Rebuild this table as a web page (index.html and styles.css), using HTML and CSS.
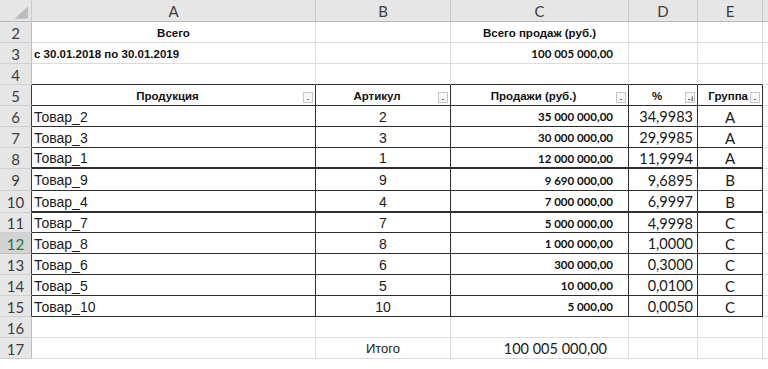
FILE: index.html
```html
<!DOCTYPE html>
<html lang="ru">
<head>
<meta charset="utf-8">
<link rel="stylesheet" href="styles.css">
</head>
<body>
<div class="sheet">
  <!-- header row -->
  <div class="c hd corner"><svg width="32" height="22" viewBox="0 0 32 22"><polygon points="15,19 29,19 29,6" fill="#bdbdbd"/></svg></div>
  <div class="c hd col">A</div>
  <div class="c hd col">B</div>
  <div class="c hd col">C</div>
  <div class="c hd col">D</div>
  <div class="c hd col">E</div>
  <div class="c hd fill"></div>

  <!-- row 2 -->
  <div class="c rh">2</div>
  <div class="c b ctr">Всего</div>
  <div class="c"></div>
  <div class="c b ctr">Всего продаж (руб.)</div>
  <div class="c"></div>
  <div class="c"></div>
  <div class="c fill"></div>

  <!-- row 3 -->
  <div class="c rh">3</div>
  <div class="c b left">с 30.01.2018 по 30.01.2019</div>
  <div class="c"></div>
  <div class="c cnum total3">100 005 000,00</div>
  <div class="c"></div>
  <div class="c"></div>
  <div class="c fill"></div>

  <!-- row 4 -->
  <div class="c rh">4</div>
  <div class="c topb"></div>
  <div class="c topb"></div>
  <div class="c topb"></div>
  <div class="c topb"></div>
  <div class="c topb"></div>
  <div class="c fill"></div>

  <!-- row 5 -->
  <div class="c rh tl">5</div>
  <div class="c t th"><span class="thl">Продукция</span><span class="fb"><svg width="9" height="10" viewBox="0 0 9 10"><polygon points="3,6 6,6 4.5,7.5" fill="#444"/></svg></span></div>
  <div class="c t th"><span class="thl">Артикул</span><span class="fb"><svg width="9" height="10" viewBox="0 0 9 10"><polygon points="3,6 6,6 4.5,7.5" fill="#444"/></svg></span></div>
  <div class="c t th"><span class="thl">Продажи (руб.)</span><span class="fb"><svg width="9" height="10" viewBox="0 0 9 10"><polygon points="3,6 6,6 4.5,7.5" fill="#444"/></svg></span></div>
  <div class="c t th"><span class="thl">%</span><span class="fb"><svg width="9" height="10" viewBox="0 0 9 10"><polygon points="2,6 5,6 3.5,7.5" fill="#444"/><line x1="7" y1="3" x2="7" y2="8" stroke="#444" stroke-width="0.9"/><polyline points="5.8,6.8 7,8 8.2,6.8" fill="none" stroke="#444" stroke-width="0.8"/></svg></span></div>
  <div class="c t th thE"><span class="thl">Группа</span><span class="fb"><svg width="9" height="10" viewBox="0 0 9 10"><polygon points="3,6 6,6 4.5,7.5" fill="#444"/></svg></span></div>
  <div class="c fill"></div>

  <!-- row 6 -->
  <div class="c rh tl">6</div>
  <div class="c t name">Товар_2</div>
  <div class="c t art">2</div>
  <div class="c t cnum">35 000 000,00</div>
  <div class="c t pct">34,9983</div>
  <div class="c t grp">A</div>
  <div class="c fill"></div>

  <!-- row 7 -->
  <div class="c rh tl">7</div>
  <div class="c t name">Товар_3</div>
  <div class="c t art">3</div>
  <div class="c t cnum">30 000 000,00</div>
  <div class="c t pct">29,9985</div>
  <div class="c t grp">A</div>
  <div class="c fill"></div>

  <!-- row 8 -->
  <div class="c rh tl">8</div>
  <div class="c t name thick">Товар_1</div>
  <div class="c t art thick">1</div>
  <div class="c t cnum thick">12 000 000,00</div>
  <div class="c t pct thick">11,9994</div>
  <div class="c t grp thick">A</div>
  <div class="c fill"></div>

  <!-- row 9 -->
  <div class="c rh tl">9</div>
  <div class="c t name">Товар_9</div>
  <div class="c t art">9</div>
  <div class="c t cnum">9 690 000,00</div>
  <div class="c t pct">9,6895</div>
  <div class="c t grp">B</div>
  <div class="c fill"></div>

  <!-- row 10 -->
  <div class="c rh tl">10</div>
  <div class="c t name thick">Товар_4</div>
  <div class="c t art thick">4</div>
  <div class="c t cnum thick">7 000 000,00</div>
  <div class="c t pct thick">6,9997</div>
  <div class="c t grp thick">B</div>
  <div class="c fill"></div>

  <!-- row 11 -->
  <div class="c rh tl">11</div>
  <div class="c t name">Товар_7</div>
  <div class="c t art">7</div>
  <div class="c t cnum">5 000 000,00</div>
  <div class="c t pct">4,9998</div>
  <div class="c t grp">C</div>
  <div class="c fill"></div>

  <!-- row 12 -->
  <div class="c rh tl sel">12</div>
  <div class="c t name">Товар_8</div>
  <div class="c t art">8</div>
  <div class="c t cnum">1 000 000,00</div>
  <div class="c t pct">1,0000</div>
  <div class="c t grp">C</div>
  <div class="c fill"></div>

  <!-- row 13 -->
  <div class="c rh tl">13</div>
  <div class="c t name">Товар_6</div>
  <div class="c t art">6</div>
  <div class="c t cnum">300 000,00</div>
  <div class="c t pct">0,3000</div>
  <div class="c t grp">C</div>
  <div class="c fill"></div>

  <!-- row 14 -->
  <div class="c rh tl">14</div>
  <div class="c t name">Товар_5</div>
  <div class="c t art">5</div>
  <div class="c t cnum">10 000,00</div>
  <div class="c t pct">0,0100</div>
  <div class="c t grp">C</div>
  <div class="c fill"></div>

  <!-- row 15 -->
  <div class="c rh tl">15</div>
  <div class="c t name">Товар_10</div>
  <div class="c t art">10</div>
  <div class="c t cnum">5 000,00</div>
  <div class="c t pct">0,0050</div>
  <div class="c t grp">C</div>
  <div class="c fill"></div>

  <!-- row 16 -->
  <div class="c rh">16</div>
  <div class="c"></div>
  <div class="c"></div>
  <div class="c"></div>
  <div class="c"></div>
  <div class="c"></div>
  <div class="c fill"></div>

  <!-- row 17 -->
  <div class="c rh">17</div>
  <div class="c"></div>
  <div class="c itogo">Итого</div>
  <div class="c total17">100 005 000,00</div>
  <div class="c"></div>
  <div class="c"></div>
  <div class="c fill"></div>
</div>
</body>
</html>
```

FILE: styles.css
```css
html, body {
  margin: 0;
  padding: 0;
  background: #ffffff;
}

.sheet {
  display: grid;
  grid-template-columns: 32px 284px 135px 178px 69px 65px 5px;
  grid-template-rows: 22px 21px 21px 21px 21px 21px 21px 21px 22px 22px 20px 21px 21px 21px 21px 21px 21px;
  width: 768px;
}

.c {
  box-sizing: border-box;
  border-right: 1px solid #dcdcdc;
  border-bottom: 1px solid #dcdcdc;
  display: flex;
  align-items: center;
  overflow: hidden;
  white-space: nowrap;
  font-family: "Liberation Sans", Arial, sans-serif;
  font-size: 14px;
  color: #1a1a1a;
  padding-top: 1px;
}

.fill {
  border-right: none;
}

/* headers */
.hd {
  background: #e6e6e6;
  border-right: 1px solid #c9c9c9;
  border-bottom: 1px solid #b8b8b8;
  justify-content: center;
  font-family: Lato, "Open Sans", sans-serif;
  font-size: 15px;
  color: #3d3d3d;
  padding-top: 0;
}

.hd.fill {
  border-right: none;
}

.corner {
  padding: 0;
  align-items: stretch;
}

.rh {
  background: #e6e6e6;
  border-right: 1px solid #bdbdbd;
  border-bottom: 1px solid #cfcfcf;
  justify-content: center;
  font-family: Lato, "Open Sans", sans-serif;
  font-size: 15px;
  color: #3d3d3d;
}

.rh.tl {
  border-right: 1px solid #3a3a3a;
}

.rh.sel {
  background: #d3d3d3;
  color: #217346;
  border-bottom: 1px solid #bdbdbd;
}

/* generic text */
.b {
  font-weight: bold;
  font-size: 11.5px;
  color: #111;
}

.ctr {
  justify-content: center;
}

.left {
  padding-left: 2px;
}

.topb {
  border-bottom: 1px solid #2e2e2e;
}

/* table region */
.t {
  border-right: 1px solid #2e2e2e;
  border-bottom: 1px solid #2e2e2e;
}

.t.thick {
  border-bottom: 2px solid #2e2e2e;
}

.th {
  font-weight: bold;
  font-size: 11.5px;
  color: #111;
  padding: 1px 2px 0 0;
}

.thl {
  flex: 1;
  text-align: center;
}

.thE .thl {
  text-align: right;
  padding-right: 2px;
}

.fb {
  width: 10px;
  height: 11px;
  box-sizing: border-box;
  border: 1px solid #c6c6c6;
  background: #f7f7f7;
  display: flex;
  align-items: center;
  justify-content: center;
  margin-top: 4px;
}

.fb svg {
  display: block;
}

.name {
  padding-left: 2px;
  font-size: 14px;
}

.art {
  justify-content: center;
  font-size: 14px;
}

.cnum {
  justify-content: flex-end;
  padding-right: 15px;
  font-family: Lato, "Open Sans", sans-serif;
  font-weight: bold;
  font-size: 11.5px;
  color: #111;
}

.total3 {
  font-size: 11.5px;
}

.pct {
  justify-content: flex-end;
  padding-right: 4px;
  font-family: Lato, "Open Sans", sans-serif;
  font-size: 14.5px;
  color: #1a1a1a;
}

.grp {
  justify-content: center;
  font-family: Lato, "Open Sans", sans-serif;
  font-size: 15px;
  color: #1a1a1a;
}

.itogo {
  justify-content: center;
  font-size: 13px;
}

.total17 {
  justify-content: flex-end;
  padding-right: 21px;
  font-family: Lato, "Open Sans", sans-serif;
  font-size: 14.5px;
  color: #1a1a1a;
}
```
